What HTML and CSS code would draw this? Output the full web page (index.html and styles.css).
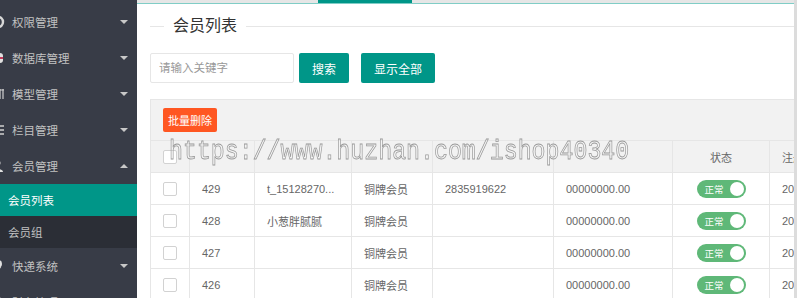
FILE: index.html
```html
<!DOCTYPE html>
<html lang="zh-CN">
<head>
    <meta charset="UTF-8">
    <title>会员列表</title>
    <link rel="stylesheet" href="styles.css">
</head>
<body>
    <div class="side">
        <ul class="nav">
            <li class="nav-title">
                <svg class="icon" viewBox="0 0 14 14"><circle cx="7" cy="7" r="5" fill="none" stroke="#d8d8d8" stroke-width="2.4"/></svg>
                <span>权限管理</span><i class="caret"></i>
            </li>
            <li class="nav-title">
                <svg class="icon" viewBox="0 0 14 14"><rect x="2" y="2" width="10" height="10" rx="3" fill="#e0e0e0"/><rect x="9" y="6" width="3" height="2" fill="#c23a5a"/></svg>
                <span>数据库管理</span><i class="caret"></i>
            </li>
            <li class="nav-title">
                <svg class="icon" viewBox="0 0 14 14"><path d="M9 2v10M12 2v10M8 3h5" stroke="#cfcfcf" stroke-width="1.2" fill="none"/></svg>
                <span>模型管理</span><i class="caret"></i>
            </li>
            <li class="nav-title">
                <svg class="icon" viewBox="0 0 14 14"><path d="M2 3h11M2 7h11M2 11h11" stroke="#d0d0d0" stroke-width="1.4"/></svg>
                <span>栏目管理</span><i class="caret"></i>
            </li>
            <li class="nav-title">
                <svg class="icon" viewBox="0 0 14 14"><circle cx="7" cy="4" r="2.5" fill="#e0e0e0"/><path d="M2 13c0-4 10-4 10 0z" fill="#e0e0e0"/></svg>
                <span>会员管理</span><i class="caret up"></i>
            </li>
            <li class="child">
                <a class="on">会员列表</a>
                <a>会员组</a>
            </li>
            <li class="nav-title">
                <svg class="icon" viewBox="0 0 14 14"><circle cx="7" cy="5" r="4" fill="#e0e0e0"/><circle cx="7" cy="5" r="1.5" fill="#383c47"/><path d="M4 8l3 5 3-5z" fill="#e0e0e0"/></svg>
                <span>快递系统</span><i class="caret"></i>
            </li>
            <li class="nav-title">
                <svg class="icon" viewBox="0 0 14 14"><circle cx="7" cy="7" r="5" fill="#e0e0e0"/></svg>
                <span>财务管理</span><i class="caret"></i>
            </li>
        </ul>
    </div>

    <div class="main">
        <div class="tabs"><span></span></div>

        <div class="content">
            <fieldset class="title">
                <legend>会员列表</legend>
            </fieldset>

            <div class="search">
                <input type="text" placeholder="请输入关键字">
                <button class="btn">搜索</button>
                <button class="btn btn-all">显示全部</button>
            </div>

            <div class="table-box">
                <div class="toolbar">
                    <button class="btn-del">批量删除</button>
                </div>
                <table>
                    <colgroup>
                        <col style="width:39px">
                        <col style="width:65px">
                        <col style="width:97px">
                        <col style="width:81px">
                        <col style="width:121px">
                        <col style="width:119px">
                        <col style="width:97px">
                        <col style="width:100px">
                    </colgroup>
                    <thead>
                        <tr>
                            <th class="ck"><span class="checkbox"></span></th>
                            <th></th>
                            <th></th>
                            <th></th>
                            <th></th>
                            <th></th>
                            <th class="center">状态</th>
                            <th>注册时间</th>
                        </tr>
                    </thead>
                    <tbody>
                        <tr>
                            <td class="ck"><span class="checkbox"></span></td>
                            <td>429</td>
                            <td>t_15128270...</td>
                            <td>铜牌会员</td>
                            <td>2835919622</td>
                            <td>00000000.00</td>
                            <td class="center"><span class="switch">正常<i></i></span></td>
                            <td>2017-12-09</td>
                        </tr>
                        <tr>
                            <td class="ck"><span class="checkbox"></span></td>
                            <td>428</td>
                            <td>小葱胖腻腻</td>
                            <td>铜牌会员</td>
                            <td></td>
                            <td>00000000.00</td>
                            <td class="center"><span class="switch">正常<i></i></span></td>
                            <td>2017-12-08</td>
                        </tr>
                        <tr>
                            <td class="ck"><span class="checkbox"></span></td>
                            <td>427</td>
                            <td></td>
                            <td>铜牌会员</td>
                            <td></td>
                            <td>00000000.00</td>
                            <td class="center"><span class="switch">正常<i></i></span></td>
                            <td>2017-12-08</td>
                        </tr>
                        <tr>
                            <td class="ck"><span class="checkbox"></span></td>
                            <td>426</td>
                            <td></td>
                            <td>铜牌会员</td>
                            <td></td>
                            <td>00000000.00</td>
                            <td class="center"><span class="switch">正常<i></i></span></td>
                            <td>2017-12-08</td>
                        </tr>
                    </tbody>
                </table>
            </div>
        </div>

        <div class="watermark">https://www.huzhan.com/ishop40340</div>
    </div>
</body>
</html>
```

FILE: styles.css
```css
* {
    box-sizing: border-box;
}
html, body {
    margin: 0;
    height: 298px;
    overflow: hidden;
}
body {
    display: flex;
    background: #fff;
    font-family: "Liberation Sans", "Noto Sans CJK SC", sans-serif;
}

/* sidebar */
.side {
    width: 137px;
    flex: none;
    background: #383c47;
    color: #c2c2c2;
    font-size: 11.5px;
    overflow: hidden;
}
.nav {
    list-style: none;
    margin: 0;
    padding: 4px 0 0;
}
.nav-title {
    height: 36px;
    display: flex;
    align-items: center;
    padding-right: 9px;
}
.icon {
    width: 14px;
    height: 14px;
    flex: none;
    margin-left: -9px;
    margin-right: 7px;
}
.caret {
    margin-left: auto;
    width: 0;
    height: 0;
    border-left: 4px solid transparent;
    border-right: 4px solid transparent;
    border-top: 4px solid #c8c8c8;
}
.caret.up {
    border-top: 0;
    border-bottom: 4px solid #c8c8c8;
}
.child {
    background: #2b2e36;
}
.child a {
    height: 32px;
    display: flex;
    align-items: center;
    padding-left: 8px;
}
.child a.on {
    background: #009688;
    color: #fff;
}

/* main */
.main {
    flex: 1;
    min-width: 0;
    position: relative;
    overflow: hidden;
    border-right: 3px solid #dcdcdc;
    margin-right: 3px;
}
.tabs {
    height: 4px;
    background: #e6e6e6;
    border-bottom: 1px solid #80cdc6;
    padding-left: 181px;
}
.tabs span {
    display: block;
    width: 94px;
    height: 3px;
    background: #009688;
}
.content {
    padding-left: 13px;
}
.title {
    margin: 11px 0 0;
    padding: 0;
    border: 0;
    border-top: 1px solid #e6e6e6;
}
.title legend {
    margin-left: 14px;
    padding: 0 9px;
    font-size: 16px;
    line-height: 22px;
    color: #333;
}
.search {
    display: flex;
    margin-top: 16px;
}
.search input {
    width: 144px;
    height: 30px;
    border: 1px solid #e6e6e6;
    border-radius: 2px;
    padding: 0 8px;
    font-family: inherit;
    font-size: 11.5px;
    outline: none;
}
.search input::placeholder {
    color: #999;
}
.btn {
    height: 30px;
    width: 50px;
    margin-left: 5px;
    border: none;
    border-radius: 2px;
    background: #009688;
    color: #fff;
    font-family: inherit;
    font-size: 12px;
    padding: 0;
}
.btn-all {
    width: 74px;
    margin-left: 12px;
}

/* table */
.table-box {
    margin-top: 16px;
    border-top: 1px solid #e6e6e6;
    border-left: 1px solid #e6e6e6;
    overflow: hidden;
}
.toolbar {
    height: 40px;
    background: #f2f2f2;
    padding: 8px 0 0 12px;
}
.btn-del {
    height: 24px;
    width: 54px;
    border: none;
    border-radius: 2px;
    background: #ff5722;
    color: #fff;
    font-family: inherit;
    font-size: 11px;
    padding: 0;
}
table {
    table-layout: fixed;
    width: 719px;
    border-collapse: collapse;
    margin-left: -1px;
    font-size: 11px;
    color: #666;
}
th, td {
    height: 32px;
    border: 1px solid #e6e6e6;
    padding: 0 0 0 12px;
    text-align: left;
    font-weight: normal;
    white-space: nowrap;
    overflow: hidden;
}
thead th {
    background: #f2f2f2;
    height: 32px;
}
.ck {
    padding: 0;
    text-align: center;
}
.center {
    padding: 0;
    text-align: center;
}
.checkbox {
    display: inline-block;
    width: 14px;
    height: 14px;
    border: 1px solid #d2d2d2;
    border-radius: 2px;
    background: #fff;
    vertical-align: middle;
}
.switch {
    display: inline-flex;
    align-items: center;
    justify-content: space-between;
    width: 49px;
    height: 18px;
    border-radius: 9px;
    background: #5fb878;
    color: #fff;
    font-size: 9.5px;
    padding: 0 2px 0 8px;
    vertical-align: middle;
}
.switch i {
    width: 14px;
    height: 14px;
    border-radius: 50%;
    background: #fff;
}

/* watermark */
.watermark {
    position: absolute;
    left: 32px;
    top: 138px;
    font-family: "Liberation Mono", monospace;
    font-size: 28px;
    line-height: 28px;
    white-space: nowrap;
    color: rgba(255, 255, 255, 0.15);
    -webkit-text-stroke: 0.8px #999;
    transform: scaleX(0.83);
    transform-origin: left top;
    filter: grayscale(1);
    pointer-events: none;
}
```
